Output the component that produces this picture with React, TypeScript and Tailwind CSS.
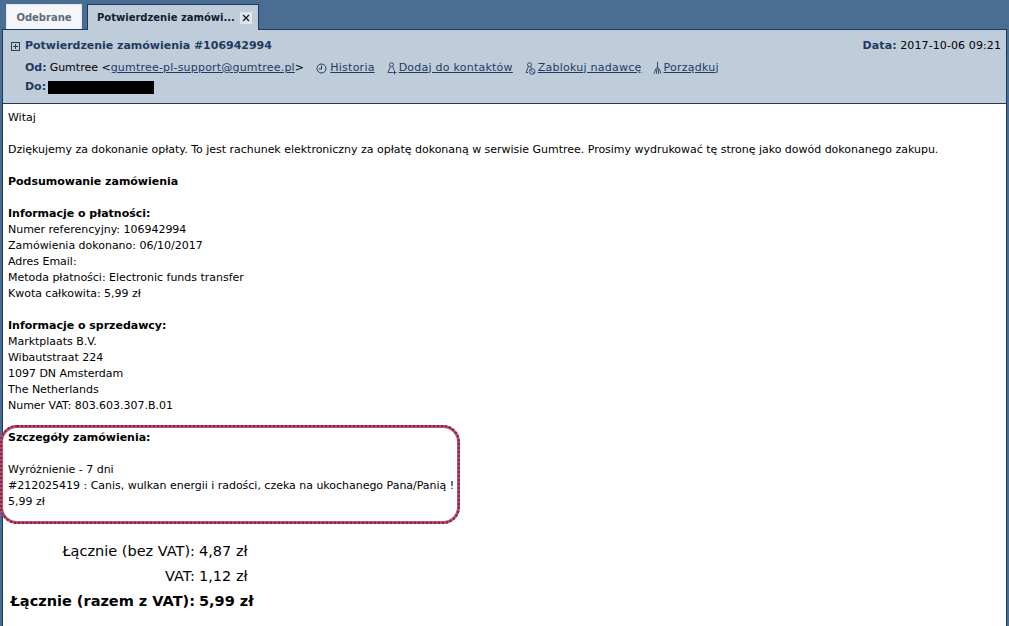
import React from "react";

function Clock() {
  return (
    <svg width="11" height="11" viewBox="0 0 11 11" fill="none" stroke="#1f3a5c" strokeWidth="1" className="mr-[3px]">
      <circle cx="5.5" cy="5.5" r="4.5" />
      <path d="M5.5 2.5V6H3" />
    </svg>
  );
}
function AddUser() {
  return (
    <svg width="10" height="13" viewBox="0 0 10 13" fill="none" stroke="#31496a" strokeWidth="1">
      <circle cx="4.5" cy="2.8" r="2" />
      <path d="M3.2 5 1 10.5h4.5M6 5l1 3M7.5 8.5v4M5.5 10.5h4" />
    </svg>
  );
}
function BlockUser() {
  return (
    <svg width="11" height="13" viewBox="0 0 11 13" fill="none" stroke="#31496a" strokeWidth="1">
      <circle cx="4.5" cy="2.8" r="2" />
      <path d="M3.2 5 1 10.5h2M5.8 5l.7 1.6" />
      <circle cx="7.2" cy="9.5" r="2.8" />
      <path d="m5.2 7.5 4 4" />
    </svg>
  );
}
function Broom() {
  return (
    <svg width="9" height="13" viewBox="0 0 9 13" fill="none" stroke="#31496a" strokeWidth="1">
      <path d="M4.5 0v6M3 6h3M3 6.5 1 11.5M3.8 7l-.5 5M5.2 7l.5 5M6 6.5l2 5" />
    </svg>
  );
}

function Line({ children, bold }: { children?: React.ReactNode; bold?: boolean }) {
  return <div className={`h-4 leading-4 whitespace-nowrap ${bold ? "font-bold" : ""}`}>{children}</div>;
}

export default function App() {
  return (
    <div className="font-['DejaVu_Sans',sans-serif] relative h-[626px] w-[1009px] overflow-hidden bg-[#4a6d94] text-[11px] tracking-[-0.02px] text-black">
      <div className="relative z-10 flex h-[29px] items-start gap-[5px] pl-[6px] pt-[4px] text-[10px] tracking-normal">
        <div className="flex h-[25px] w-[76px] items-center justify-center border border-b-0 border-[#dfe6ee] bg-[#f4f6fa] font-bold text-[#5d6b7b]">
          Odebrane
        </div>
        <div className="flex h-[26px] w-[172px] items-center gap-[5px] whitespace-nowrap border border-b-0 border-[#1c3a5e] bg-[#bfcddb] pl-[9px] font-bold text-[#10202f]">
          <span>Potwierdzenie zamówi...</span>
          <span className="flex h-[12px] w-[12px] shrink-0 items-center justify-center bg-[#dfe5ec]">
            <svg width="8" height="8" viewBox="0 0 8 8" stroke="#222" strokeWidth="1.4">
              <path d="m1 1 6 6M7 1 1 7" />
            </svg>
          </span>
        </div>
      </div>
      <div className="ml-[2px] mr-[2px] h-[75px] border border-[#1c3a5e] bg-[#bfcddb] pl-[8px] pr-[5px]">
        <div className="flex h-[28px] items-center justify-between pt-[5px]">
          <div className="flex items-center gap-[5px]">
            <svg width="9" height="9" viewBox="0 0 9 9" fill="none" stroke="#2c3e50" strokeWidth="1">
              <rect x="0.5" y="0.5" width="8" height="8" />
              <path d="M2 4.5h5M4.5 2v5" />
            </svg>
            <span className="font-bold text-[#1f3a60]">Potwierdzenie zamówienia #106942994</span>
          </div>
          <div className="tracking-[0.1px]">
            <span className="font-bold text-[#1f3a60]">Data:</span> 2017-10-06 09:21
          </div>
        </div>
        <div className="flex h-[20px] items-center whitespace-nowrap pl-[14px] tracking-[0.24px]">
          <span className="font-bold tracking-normal text-[#1f3a60]">Od:</span>
          <span className="ml-[3px]">
            <span className="tracking-normal">Gumtree &lt;</span>
            <span className="tracking-[0.2px] text-[#1f3a60] underline">gumtree-pl-support@gumtree.pl</span>&gt;
          </span>
          <span className="ml-[12px] flex items-center text-[#1f3a60]">
            <Clock />
            <span className="underline">Historia</span>
          </span>
          <span className="ml-[12px] flex items-center gap-[2px] text-[#1f3a60]">
            <AddUser />
            <span className="underline">Dodaj do kontaktów</span>
          </span>
          <span className="ml-[12px] flex items-center gap-[2px] text-[#1f3a60]">
            <BlockUser />
            <span className="underline">Zablokuj nadawcę</span>
          </span>
          <span className="ml-[11px] flex items-center gap-[2px] text-[#1f3a60]">
            <Broom />
            <span className="underline">Porządkuj</span>
          </span>
        </div>
        <div className="flex h-[18px] items-center pl-[14px]">
          <span className="font-bold text-[#1f3a60]">Do:</span>
          <span className="ml-[2px] h-[13px] w-[106px] bg-black" />
        </div>
      </div>
      <div className="ml-[2px] mr-[2px] h-[523px] border-x border-[#1c3a5e] bg-white pl-[5px] pt-[6px]">
        <Line>Witaj</Line>
        <Line />
        <Line>
          Dziękujemy za dokonanie opłaty. To jest rachunek elektroniczny za opłatę dokonaną w serwisie Gumtree. Prosimy wydrukować tę stronę jako dowód dokonanego zakupu.
        </Line>
        <Line />
        <Line bold>Podsumowanie zamówienia</Line>
        <Line />
        <Line bold>Informacje o płatności:</Line>
        <Line>Numer referencyjny: 106942994</Line>
        <Line>Zamówienia dokonano: 06/10/2017</Line>
        <Line>Adres Email:</Line>
        <Line>Metoda płatności: Electronic funds transfer</Line>
        <Line>Kwota całkowita: 5,99 zł</Line>
        <Line />
        <Line bold>Informacje o sprzedawcy:</Line>
        <Line>Marktplaats B.V.</Line>
        <Line>Wibautstraat 224</Line>
        <Line>1097 DN Amsterdam</Line>
        <Line>The Netherlands</Line>
        <Line>Numer VAT: 803.603.307.B.01</Line>
        <Line />
        <Line bold>Szczegóły zamówienia:</Line>
        <Line />
        <Line>Wyróżnienie - 7 dni</Line>
        <Line>#212025419 : Canis, wulkan energii i radości, czeka na ukochanego Pana/Panią !</Line>
        <Line>5,99 zł</Line>
        <div className="mt-[29px] grid w-fit grid-cols-[187px_auto] gap-x-[4px] whitespace-nowrap text-[14.5px] leading-[25px] tracking-normal">
          <div className="justify-self-end">Łącznie (bez VAT):</div>
          <div>4,87 zł</div>
          <div className="justify-self-end">VAT:</div>
          <div>1,12 zł</div>
          <div className="justify-self-end font-bold">Łącznie (razem z VAT):</div>
          <div className="font-bold">5,99 zł</div>
        </div>
      </div>
      <div className="absolute left-[0px] top-[425px] h-[99px] w-[460px] rounded-[17px] border-[3px] border-solid border-[#b3546f]">
        <div className="absolute -inset-[3px] rounded-[17px] border-[2px] border-dotted border-[#96193f]" />
      </div>
    </div>
  );
}
